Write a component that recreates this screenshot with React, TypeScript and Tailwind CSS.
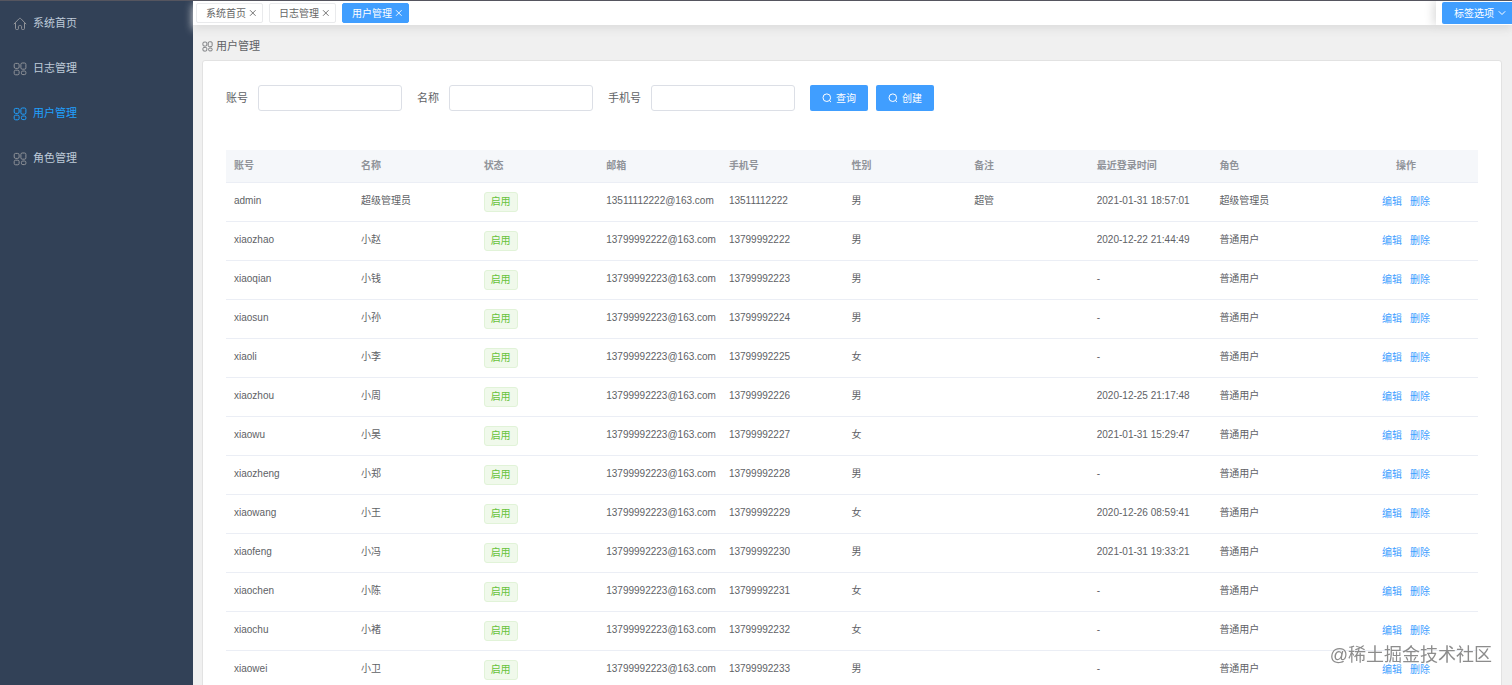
import { useState } from "react";

type User = {
  account: string;
  name: string;
  email: string;
  phone: string;
  gender: string;
  remark?: string;
  lastLogin: string;
  role: string;
};

const users: User[] = [
  { account: "admin", name: "超级管理员", email: "13511112222@163.com", phone: "13511112222", gender: "男", remark: "超管", lastLogin: "2021-01-31 18:57:01", role: "超级管理员" },
  { account: "xiaozhao", name: "小赵", email: "13799992222@163.com", phone: "13799992222", gender: "男", lastLogin: "2020-12-22 21:44:49", role: "普通用户" },
  { account: "xiaoqian", name: "小钱", email: "13799992223@163.com", phone: "13799992223", gender: "男", lastLogin: "-", role: "普通用户" },
  { account: "xiaosun", name: "小孙", email: "13799992223@163.com", phone: "13799992224", gender: "男", lastLogin: "-", role: "普通用户" },
  { account: "xiaoli", name: "小李", email: "13799992223@163.com", phone: "13799992225", gender: "女", lastLogin: "-", role: "普通用户" },
  { account: "xiaozhou", name: "小周", email: "13799992223@163.com", phone: "13799992226", gender: "男", lastLogin: "2020-12-25 21:17:48", role: "普通用户" },
  { account: "xiaowu", name: "小吴", email: "13799992223@163.com", phone: "13799992227", gender: "女", lastLogin: "2021-01-31 15:29:47", role: "普通用户" },
  { account: "xiaozheng", name: "小郑", email: "13799992223@163.com", phone: "13799992228", gender: "男", lastLogin: "-", role: "普通用户" },
  { account: "xiaowang", name: "小王", email: "13799992223@163.com", phone: "13799992229", gender: "女", lastLogin: "2020-12-26 08:59:41", role: "普通用户" },
  { account: "xiaofeng", name: "小冯", email: "13799992223@163.com", phone: "13799992230", gender: "男", lastLogin: "2021-01-31 19:33:21", role: "普通用户" },
  { account: "xiaochen", name: "小陈", email: "13799992223@163.com", phone: "13799992231", gender: "女", lastLogin: "-", role: "普通用户" },
  { account: "xiaochu", name: "小褚", email: "13799992223@163.com", phone: "13799992232", gender: "女", lastLogin: "-", role: "普通用户" },
  { account: "xiaowei", name: "小卫", email: "13799992223@163.com", phone: "13799992233", gender: "男", lastLogin: "-", role: "普通用户" },
];

const menuItems = ["系统首页", "日志管理", "用户管理", "角色管理"];
const columns = ["账号", "名称", "状态", "邮箱", "手机号", "性别", "备注", "最近登录时间", "角色"];
const fields = [
  { id: "account", label: "账号" },
  { id: "name", label: "名称" },
  { id: "phone", label: "手机号" },
];

const HomeIcon = () => (
  <svg viewBox="0 0 14 14" className="block size-[14px]" fill="none" stroke="currentColor" aria-hidden="true">
    <path d="M.8 7.2 6.1 1.7c.6-.6 1.2-.6 1.8 0l5.3 5.5M2.5 6v5.4c0 .8.4 1.1 1.1 1.1h1.1c.5 0 .7-.3.7-.8V9.6c0-.7.4-1 1-1h1.2c.6 0 1 .3 1 1v2.1c0 .5.2.8.7.8h1.1c.7 0 1.1-.3 1.1-1.1V6" />
  </svg>
);

const CascadeIcon = ({ className }: { className: string }) => (
  <svg viewBox="0 0 14 14" className={className} fill="none" stroke="currentColor" aria-hidden="true">
    <rect x="1.2" y="1.4" width="4.9" height="5" rx="1.4" />
    <rect x="7.9" y="1" width="5" height="6.2" rx="1.4" />
    <rect x="1.2" y="8.2" width="4.9" height="4.6" rx="1.4" />
    <rect x="8.4" y="9" width="4.5" height="3.6" rx="1.4" />
  </svg>
);

const SearchIcon = () => (
  <svg viewBox="0 0 10 10" className="size-[10px]" fill="none" stroke="currentColor" aria-hidden="true">
    <circle cx="4.8" cy="4.7" r="3.8" />
    <path d="m7.4 7.5 1.6 1.6" />
  </svg>
);

const CloseIcon = () => (
  <svg viewBox="0 0 8 8" className="size-2" fill="none" stroke="currentColor" strokeWidth="0.9" aria-hidden="true">
    <path d="m1 1.2 5.6 5.6M6.6 1.2 1 6.8" />
  </svg>
);

const Sidebar = ({ active, onSelect }: { active: string; onSelect: (title: string) => void }) => (
  <nav className="w-[193px] shrink-0 bg-[#324157]">
    <ul>
      {menuItems.map((title, i) => (
        <li key={title}>
          <a
            href="#"
            onClick={() => onSelect(title)}
            className={`flex h-[45px] items-center gap-[6px] px-[13px] text-[11px] ${
              active === title ? "text-[#20a0ff]" : "text-[#bfcbd9]"
            }`}
          >
            <span className={active === title ? "" : "text-[#909399]"}>
              {i === 0 ? <HomeIcon /> : <CascadeIcon className="block size-[14px]" />}
            </span>
            {title}
          </a>
        </li>
      ))}
    </ul>
  </nav>
);

const TabsBar = ({ active, onSelect }: { active: string; onSelect: (title: string) => void }) => (
  <header className="relative z-10 flex h-6 shrink-0 items-center justify-between bg-white shadow-[0_4px_8px_#ddd]">
    <ul className="flex gap-[6px] pl-[3px]">
      {menuItems.slice(0, 3).map((title) => (
        <li
          key={title}
          className={`flex h-5 items-center gap-[3px] rounded-[2px] border pr-[5px] pl-[9px] text-[10px] ${
            active === title
              ? "border-[#409eff] bg-[#409eff] text-white"
              : "border-[#e9eaec] bg-white text-[#666]"
          }`}
        >
          <button onClick={() => onSelect(title)}>{title}</button>
          <button aria-label={`关闭${title}`}>
            <CloseIcon />
          </button>
        </li>
      ))}
    </ul>
    <div className="h-full bg-white pt-px pl-[6px] shadow-[-3px_0_10px_#ddd]">
      <button className="flex h-[22px] items-center gap-1 rounded-l-[2px] bg-[#409eff] pr-[6px] pl-3 text-[10px] text-white">
        标签选项
        <svg viewBox="0 0 8 8" className="size-2" fill="none" stroke="currentColor" aria-hidden="true">
          <path d="m.8 2.3 3.2 3.2 3.2-3.2" />
        </svg>
      </button>
    </div>
  </header>
);

const UserTable = () => (
  <table className="w-full table-fixed border-collapse text-left text-[10px] leading-4 text-[#606266]">
    <colgroup>
      <col className="w-[127px]" />
      {columns.slice(1).map((c) => (
        <col key={c} />
      ))}
      <col className="w-[144px]" />
    </colgroup>
    <thead className="text-[#909399]">
      <tr className="h-8 border-b border-[#ebeef5] bg-[#f5f7fa]">
        {columns.map((c) => (
          <th key={c} className="px-2 font-bold">{c}</th>
        ))}
        <th className="px-2 text-center font-bold">操作</th>
      </tr>
    </thead>
    <tbody>
      {users.map((u) => (
        <tr key={u.account} className="h-[39px] border-b border-[#ebeef5]">
          <td className="px-2 pb-[2px]">{u.account}</td>
          <td className="px-2 pb-[2px]">{u.name}</td>
          <td className="px-2">
            <span className="inline-flex h-5 items-center rounded-[3px] border border-[#e1f3d8] bg-[#f0f9eb] px-[6px] text-[#67c23a]">
              启用
            </span>
          </td>
          <td className="px-2 pb-[2px]">{u.email}</td>
          <td className="px-2 pb-[2px]">{u.phone}</td>
          <td className="px-2 pb-[2px]">{u.gender}</td>
          <td className="px-2 pb-[2px]">{u.remark}</td>
          <td className="px-2 pb-[2px]">{u.lastLogin}</td>
          <td className="px-2 pb-[2px]">{u.role}</td>
          <td className="px-2">
            <div className="flex justify-center gap-2 text-[#409eff]">
              <button>编辑</button>
              <button>删除</button>
            </div>
          </td>
        </tr>
      ))}
    </tbody>
  </table>
);

const App = () => {
  const [active, setActive] = useState("用户管理");

  return (
    <div className="flex h-screen overflow-hidden border-t border-[#55555f] bg-[#f0f0f0] font-['Liberation_Sans','Noto_Sans_CJK_SC',sans-serif]">
      <Sidebar active={active} onSelect={setActive} />
      <div className="flex min-w-0 flex-1 flex-col">
        <TabsBar active={active} onSelect={setActive} />
        <main className="flex-1 overflow-y-auto pt-3 pr-[10px] pl-[9px] [scrollbar-width:none]">
          <h1 className="flex h-[18px] items-center gap-[3px] text-[11px] text-[#606266]">
            <CascadeIcon className="size-[11px]" />
            {active}
          </h1>
          <section className="mt-[5px] rounded-[3px] border border-[#e2e2e2] bg-white px-[23px] pt-6">
            <form className="flex flex-wrap items-center gap-[15px]" onSubmit={(e) => e.preventDefault()}>
              {fields.map((f) => (
                <div key={f.id} className="flex items-center gap-[10px]">
                  <label htmlFor={f.id} className="text-[11px] text-[#606266]">{f.label}</label>
                  <input
                    id={f.id}
                    className="h-[26px] w-36 rounded-[3px] border border-[#dcdfe6] bg-white px-2 text-[11px] outline-none focus:border-[#409eff]"
                  />
                </div>
              ))}
              <div className="flex gap-2 text-[10px] text-white">
                <button type="submit" className="flex h-[26px] items-center gap-1 rounded-[2px] bg-[#409eff] px-3">
                  <SearchIcon />
                  查询
                </button>
                <button type="button" className="flex h-[26px] items-center gap-1 rounded-[2px] bg-[#409eff] px-3">
                  <SearchIcon />
                  创建
                </button>
              </div>
            </form>
            <div className="mt-[39px]">
              <UserTable />
            </div>
          </section>
        </main>
      </div>
      <p className="pointer-events-none fixed right-5 bottom-[18px] z-20 text-[18px] leading-6 text-[#8c8c8c] [text-shadow:0_0_2px_#fff]">
        @稀土掘金技术社区
      </p>
    </div>
  );
};

export default App;
